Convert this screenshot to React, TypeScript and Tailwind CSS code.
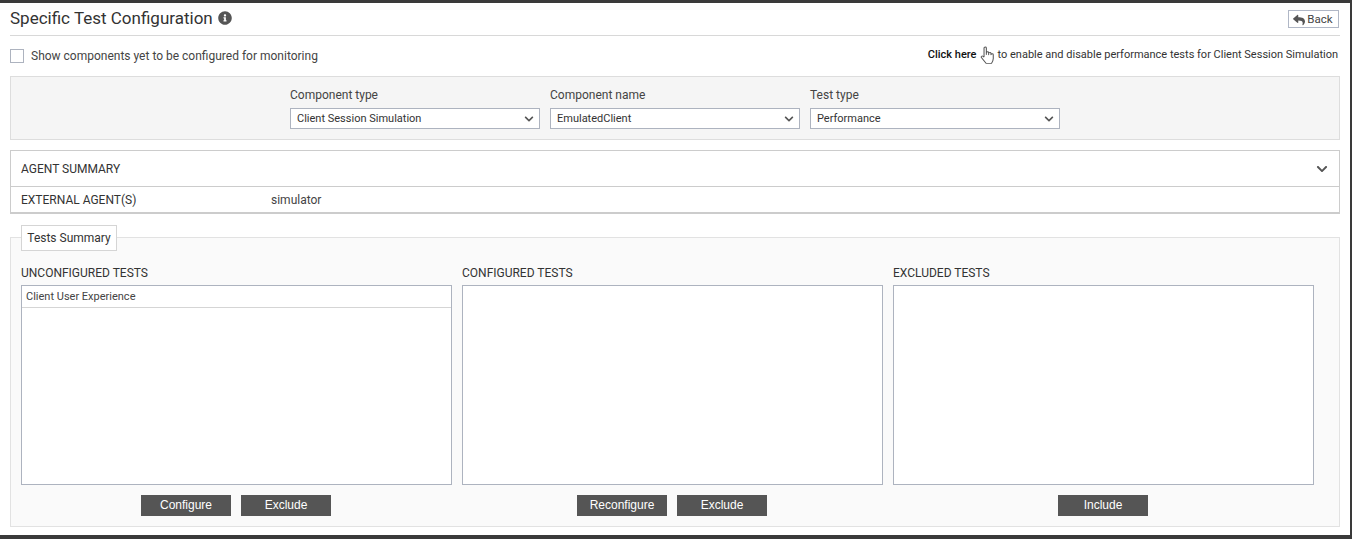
import { FaInfoCircle, FaReply, FaChevronDown } from "react-icons/fa";

const FILTERS = [
  { label: "Component type", value: "Client Session Simulation" },
  { label: "Component name", value: "EmulatedClient" },
  { label: "Test type", value: "Performance" },
];

const COLUMNS = [
  { title: "UNCONFIGURED TESTS", width: "w-[431px]", items: ["Client User Experience"], buttons: ["Configure", "Exclude"] },
  { title: "CONFIGURED TESTS", width: "w-[421px]", items: [], buttons: ["Reconfigure", "Exclude"] },
  { title: "EXCLUDED TESTS", width: "w-[421px]", items: [], buttons: ["Include"] },
];

function HandIcon() {
  return (
    <svg viewBox="0 0 13 18" preserveAspectRatio="none" className="mx-[3px] h-[18px] w-[15px] text-[#555]" fill="none" stroke="currentColor" strokeWidth="0.9" strokeLinejoin="round">
      <path d="M3.5 11V2a1 1 0 0 1 2 0v6.5V6.7a1 1 0 0 1 2 0v2V7.4a1 1 0 0 1 2 0v1.3a1 1 0 0 1 2 0v3.8c0 2.2-.8 3.6-1.6 4.9H5.4L1.2 11.6c-.7-1 .6-2.2 1.4-1.4L3.5 11.2" />
    </svg>
  );
}

export default function App() {
  return (
    <div className="h-[539px] w-[1352px] overflow-hidden bg-[#3a3a3a] pt-[3px] pr-[2px] pb-[4px] font-['Roboto',sans-serif] text-[12px] text-[#333]">
      <div className="h-[532px] bg-white px-[10px]">
        {/* Title */}
        <div className="flex h-[33px] items-center justify-between border-b border-[#d8d8d8]">
          <div className="flex items-center gap-[5px] pb-[3px]">
            <h1 className="text-[17px] leading-[24px] text-[#333]">Specific Test Configuration</h1>
            <FaInfoCircle className="text-[14px] text-[#555]" />
          </div>
          <button className="mr-[1px] flex h-[18px] w-[51px] items-center justify-center gap-[2px] border border-[#b0b7c6] pt-[1px] pr-[1px] text-[11.5px] text-[#444]">
            <FaReply className="text-[12px] text-[#555]" />
            Back
          </button>
        </div>

        {/* Checkbox row */}
        <div className="flex h-[40px] items-center justify-between">
          <label className="flex items-center gap-[7px] text-[12px] text-[#444]">
            <span className="h-[14px] w-[14px] border border-[#adb3bf] bg-white" />
            Show components yet to be configured for monitoring
          </label>
          <div className="mr-[2px] -mt-[2px] flex items-center text-[11px] text-[#333]">
            <span className="font-medium text-[#111]">Click here</span>
            <HandIcon />
            <span>to enable and disable performance tests for Client Session Simulation</span>
          </div>
        </div>

        {/* Filters */}
        <div className="flex h-[64px] justify-center gap-[10px] border border-[#ddd] bg-[#f5f5f5] pt-[11px]">
          {FILTERS.map((f) => (
            <div key={f.label} className="w-[250px]">
              <div className="mb-[5px] text-[12px] leading-[15px] text-[#444]">{f.label}</div>
              <div className="flex h-[21px] items-center justify-between border border-[#adb3bf] bg-white pt-[1px] pr-[5px] pl-[6px] text-[11px] text-[#333]">
                {f.value}
                <FaChevronDown className="text-[10px] text-[#555]" />
              </div>
            </div>
          ))}
        </div>

        {/* Agent summary */}
        <div className="mt-[10px] border border-b-2 border-[#ccc] bg-white">
          <div className="flex h-[36px] items-center justify-between border-b border-[#ccc] pr-[11px] pl-[10px]">
            <span className="text-[12px]">AGENT SUMMARY</span>
            <FaChevronDown className="text-[12px] text-[#555]" />
          </div>
          <div className="flex h-[25px] items-center pl-[10px] text-[12px]">
            <span className="w-[250px]">EXTERNAL AGENT(S)</span>
            <span className="text-[#444]">simulator</span>
          </div>
        </div>

        {/* Tests summary */}
        <div className="mt-[23px] h-[290px] border border-[#e2e2e2] bg-[#fafafa] px-[10px]">
          <div className="-mt-[13px] flex h-[26px] w-[96px] items-center justify-center border border-[#d5d5d5] bg-white text-[12px] text-[#333]">
            Tests Summary
          </div>
          <div className="mt-[15px] flex gap-[10px]">
            {COLUMNS.map((c) => (
              <div key={c.title} className={c.width}>
                <div className="mb-[4px] text-[12px] leading-[15px]">{c.title}</div>
                <div className="h-[200px] border border-[#adb3bf] bg-white">
                  {c.items.map((item) => (
                    <div key={item} className="flex h-[22px] items-center border-b border-[#d5d5d5] pt-[1px] pl-[4px] text-[11px] text-[#444]">
                      {item}
                    </div>
                  ))}
                </div>
                <div className="mt-[10px] flex justify-center gap-[10px] pr-[1px]">
                  {c.buttons.map((b) => (
                    <button key={b} className="flex h-[21px] w-[90px] items-center justify-center bg-[#555] pb-[1px] font-['Liberation_Sans',sans-serif] text-[12px] text-white">
                      {b}
                    </button>
                  ))}
                </div>
              </div>
            ))}
          </div>
        </div>
      </div>
    </div>
  );
}
